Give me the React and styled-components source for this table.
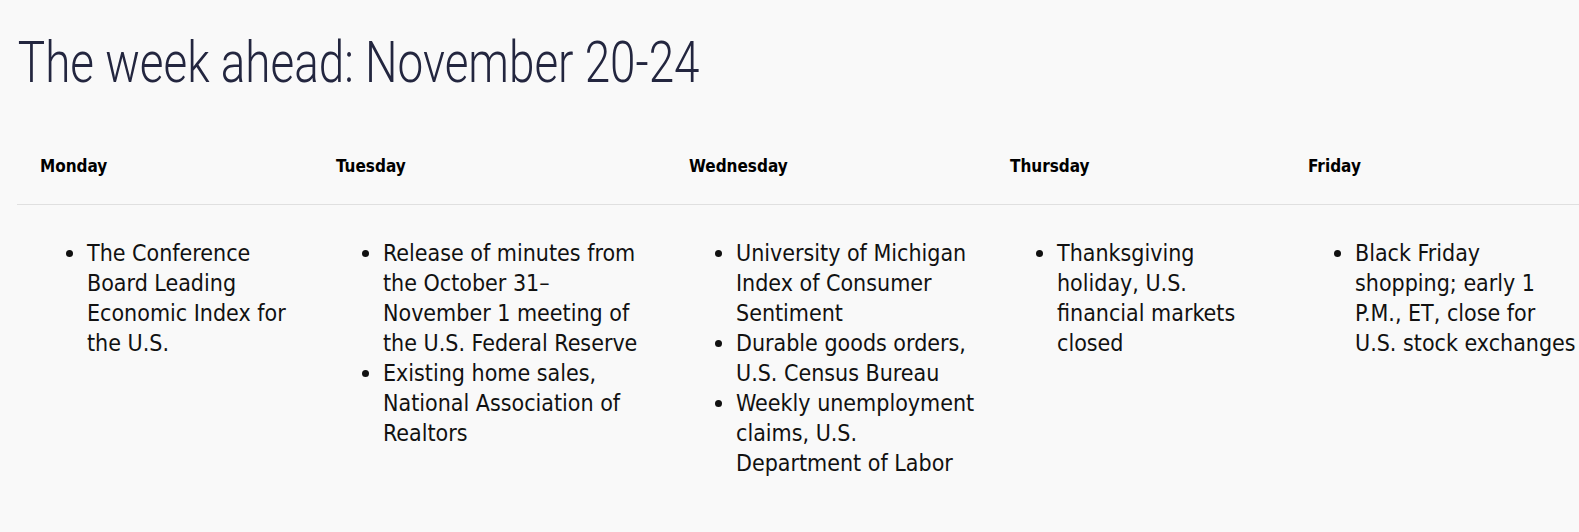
import React from "react";
import styled, { createGlobalStyle } from "styled-components";

const GlobalStyle = createGlobalStyle`
  html, body {
    margin: 0;
    padding: 0;
    background: #f9f9f9;
  }
  body {
    font-family: "DejaVu Sans Condensed", "Liberation Sans", sans-serif;
    color: #111;
  }
`;

const Page = styled.div`
  width: 1579px;
  height: 532px;
  overflow: hidden;
  background: #f9f9f9;
  padding: 0 0 0 17px;
  box-sizing: border-box;
`;

const Title = styled.h1`
  margin: 0;
  padding: 26px 0 0 1px;
  display: inline-block;
  font-family: Roboto, "Liberation Sans", sans-serif;
  font-size: 58px;
  line-height: 72px;
  font-weight: 300;
  color: #23263f;
  white-space: nowrap;
  transform: scaleX(0.79);
  transform-origin: left center;
`;

const Table = styled.div`
  margin-top: 23px;
  display: grid;
  grid-template-columns: 296px 353px 321px 298px 1fr;
`;

const HeadCell = styled.div`
  height: 84px;
  box-sizing: border-box;
  padding: 6px 0 0 23px;
  display: flex;
  align-items: center;
  font-size: 17px;
  font-weight: 700;
  color: #000;
  border-bottom: 1px solid #e0e0e0;
`;

const BodyCell = styled.div`
  padding: 33px 0 0 0;
`;

const List = styled.ul`
  margin: 0;
  padding: 0 0 0 70px;
  width: ${(p) => p.$w}px;
  box-sizing: content-box;
`;

const Item = styled.li`
  font-size: 23px;
  line-height: 30px;
  color: #111;
  list-style: disc;
`;

const days = [
  { name: "Monday", w: 200, items: ["The Conference Board Leading Economic Index for the U.S."] },
  {
    name: "Tuesday",
    w: 256,
    items: [
      "Release of minutes from the October 31– November 1 meeting of the U.S. Federal Reserve",
      "Existing home sales, National Association of Realtors",
    ],
  },
  {
    name: "Wednesday",
    w: 242,
    items: [
      "University of Michigan Index of Consumer Sentiment",
      "Durable goods orders, U.S. Census Bureau",
      "Weekly unemployment claims, U.S. Department of Labor",
    ],
  },
  { name: "Thursday", w: 180, items: ["Thanksgiving holiday, U.S. financial markets closed"] },
  { name: "Friday", w: 223, items: ["Black Friday shopping; early 1 P.M., ET, close for U.S. stock exchanges"] },
];

export default function App() {
  return (
    <Page>
      <GlobalStyle />
      <Title>The week ahead: November 20-24</Title>
      <Table>
        {days.map((d) => (
          <HeadCell key={d.name}>{d.name}</HeadCell>
        ))}
        {days.map((d) => (
          <BodyCell key={d.name}>
            <List $w={d.w}>
              {d.items.map((t) => (
                <Item key={t}>{t}</Item>
              ))}
            </List>
          </BodyCell>
        ))}
      </Table>
    </Page>
  );
}
